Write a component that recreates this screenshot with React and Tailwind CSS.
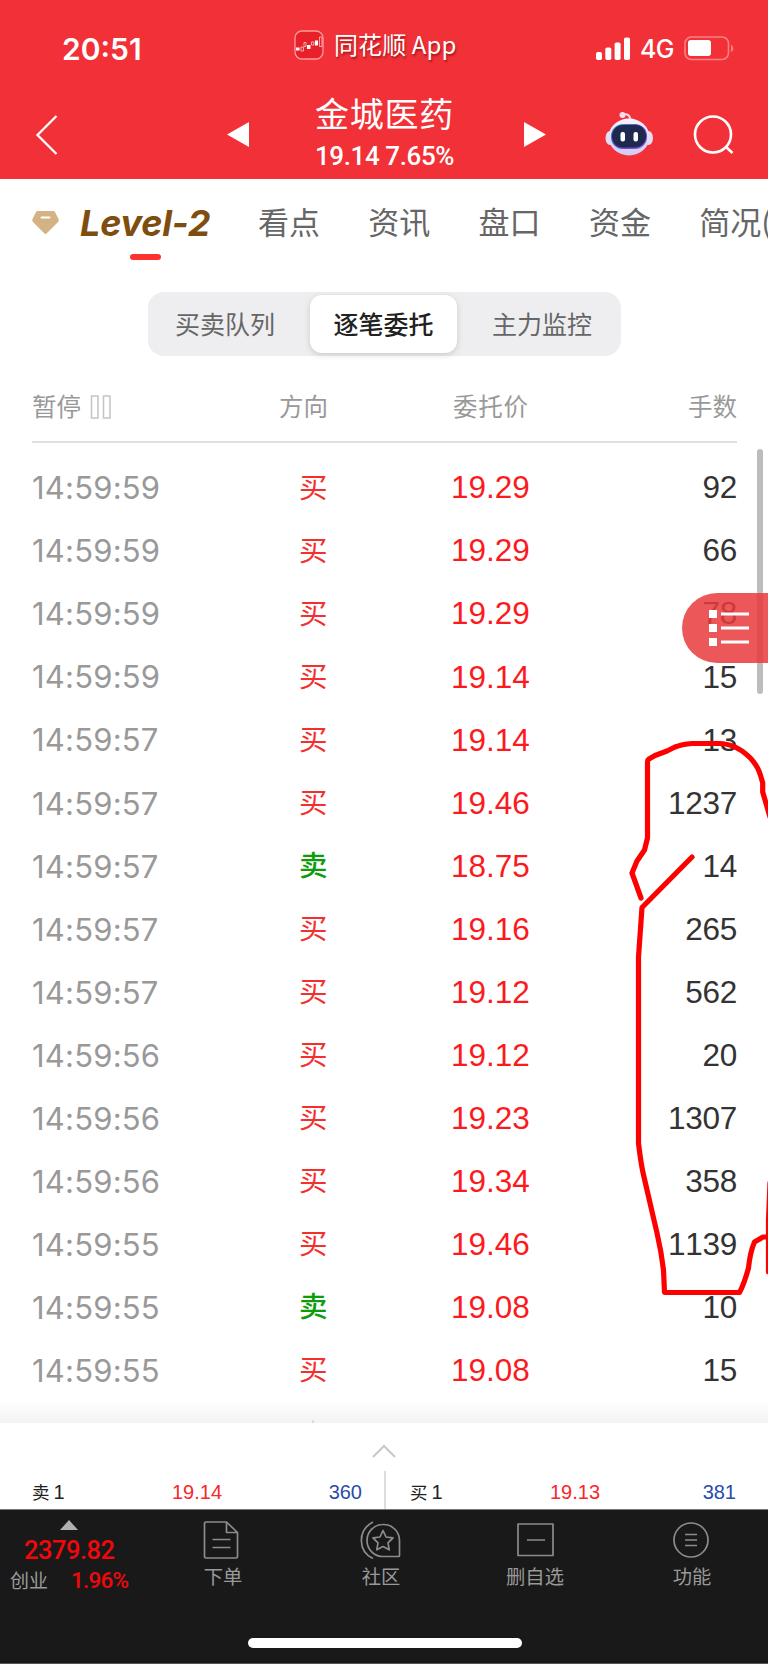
const TABS = ['看点', '资讯', '盘口', '资金', '简况('];

const ORDERS = [
  { time: '14:59:59', side: '买', price: '19.29', lots: 92 },
  { time: '14:59:59', side: '买', price: '19.29', lots: 66 },
  { time: '14:59:59', side: '买', price: '19.29', lots: 78 },
  { time: '14:59:59', side: '买', price: '19.14', lots: 15 },
  { time: '14:59:57', side: '买', price: '19.14', lots: 13 },
  { time: '14:59:57', side: '买', price: '19.46', lots: 1237 },
  { time: '14:59:57', side: '卖', price: '18.75', lots: 14 },
  { time: '14:59:57', side: '买', price: '19.16', lots: 265 },
  { time: '14:59:57', side: '买', price: '19.12', lots: 562 },
  { time: '14:59:56', side: '买', price: '19.12', lots: 20 },
  { time: '14:59:56', side: '买', price: '19.23', lots: 1307 },
  { time: '14:59:56', side: '买', price: '19.34', lots: 358 },
  { time: '14:59:55', side: '买', price: '19.46', lots: 1139 },
  { time: '14:59:55', side: '卖', price: '19.08', lots: 10 },
  { time: '14:59:55', side: '买', price: '19.08', lots: 15 },
];

function AppLogo() {
  return (
    <svg width="30" height="30" viewBox="0 0 30 30" fill="none">
      <rect x="1" y="1" width="28" height="28" rx="7" fill="#e8202a" stroke="#ff9a9c" strokeWidth="1.3" />
      <path d="M2 17.5h3.5v3H2z M13 15h3.5v4H13z M21 10.500h3v5h-3z" fill="#fff" />
      <path d="M7 17h2.500v4H7z M10 12.500h2v4h-2z M17.500 12h2.500v3h-2.500z M25.500 7h2.500v9.500h-2.500z" stroke="#ffc9c9" strokeWidth=".8" />
    </svg>
  );
}

function Signal() {
  return (
    <svg width="35" height="24" viewBox="0 0 35 24" fill="#fff">
      <rect x="0" y="15" width="6" height="8" rx="1.800" />
      <rect x="9.300" y="10.500" width="6" height="12.500" rx="1.800" />
      <rect x="18.600" y="5.500" width="6" height="17.500" rx="1.800" />
      <rect x="28" y="0.500" width="6" height="22.500" rx="1.800" />
    </svg>
  );
}

function Battery() {
  return (
    <svg className="-mt-px" width="51" height="25" viewBox="0 0 51 25" fill="none">
      <rect x="1" y="1" width="43.500" height="22.500" rx="6.500" stroke="#fa8085" strokeWidth="1.600" />
      <rect x="4" y="4" width="23" height="16" rx="3" fill="#fff" />
      <path d="M47 9c3 1 3 6 0 7z" fill="#fa8085" />
    </svg>
  );
}

function Robot() {
  return (
    <svg width="48" height="46" viewBox="0 0 48 46" fill="none">
      <defs>
        <linearGradient id="shell" x1="0" y1="0" x2="0" y2="1">
          <stop offset="0" stopColor="#fbf3fb" />
          <stop offset="1" stopColor="#cfcaf2" />
        </linearGradient>
        <linearGradient id="visor" x1="0" y1="0" x2="1" y2="1">
          <stop offset="0" stopColor="#3aa6c9" />
          <stop offset=".5" stopColor="#5a3fc4" />
          <stop offset="1" stopColor="#8d5ae8" />
        </linearGradient>
      </defs>
      <path d="M17 4c5-2 8 0 8.500 5" stroke="#f5dfee" strokeWidth="2" />
      <circle cx="17.500" cy="4" r="3" fill="#f5dfee" />
      <ellipse cx="5" cy="27" rx="4.500" ry="7" fill="#e4dcf6" />
      <ellipse cx="43.500" cy="27" rx="4.500" ry="7" fill="#e4dcf6" />
      <ellipse cx="24" cy="26" rx="20.500" ry="18.500" fill="url(#shell)" />
      <rect x="6" y="13" width="36" height="25" rx="12" fill="url(#visor)" />
      <rect x="7" y="14" width="34" height="22.500" rx="11" fill="#1f294e" />
      <rect x="15.500" y="21" width="4.500" height="9.500" rx="2" fill="#fff" />
      <rect x="28.500" y="21" width="4.500" height="9.500" rx="2" fill="#fff" />
    </svg>
  );
}

function StatusBar() {
  return (
    <div className="flex h-[98px] items-center text-white">
      <span className="ml-[62px] w-[232px] font-['Inter'] text-[30px] font-semibold leading-none">20:51</span>
      <div className="-mt-2 flex w-[302px] items-center">
        <AppLogo />
        <span className="-mt-[3px] ml-[10px] text-[24px] leading-none tracking-[0.1px] [text-shadow:1px_2px_2px_rgba(90,0,0,0.5)]">
          同花顺 App
        </span>
      </div>
      <Signal />
      <span className="ml-[9px] mt-px w-[44px] font-['Inter'] text-[25px] font-medium leading-none tracking-tight">4G</span>
      <Battery />
    </div>
  );
}

function TitleBar() {
  return (
    <div className="flex h-[81px] text-white">
      <svg className="ml-[35px] mt-4" width="24" height="42" viewBox="0 0 24 42" fill="none" stroke="#fff" strokeWidth="2.300">
        <path d="M21.500 2 2.500 21l19 19" />
      </svg>
      <svg className="ml-[168px] mt-6" width="22" height="25" viewBox="0 0 22 25" fill="#fff">
        <path d="M22 0v25L0 12.500z" />
      </svg>
      <div className="ml-[42px] flex w-[187px] flex-col items-center">
        <h1 className="-mt-[5px] text-[34px] leading-[40px] tracking-[0.8px]">金城医药</h1>
        <p className="mt-[8px] whitespace-nowrap font-['Roboto'] text-[26px] font-medium leading-[30px] tracking-[-0.4px]">19.14 7.65%</p>
      </div>
      <svg className="ml-[46px] mt-6" width="22" height="25" viewBox="0 0 22 25" fill="#fff">
        <path d="M0 0v25l22-12.500z" />
      </svg>
      <div className="ml-[59px] mt-[13px]">
        <Robot />
      </div>
      <svg className="ml-[40px] mt-4" width="42" height="42" viewBox="0 0 42 42" fill="none" stroke="#fff" strokeWidth="2.600">
        <circle cx="20" cy="20.500" r="18" />
        <path d="M32.500 32.500l7 6.500" />
      </svg>
    </div>
  );
}

function Tabs() {
  return (
    <nav className="flex h-[113px] overflow-hidden whitespace-nowrap text-[#666]">
      <svg className="ml-8 mt-[32px] shrink-0" width="27" height="24" viewBox="0 0 27 24" fill="none">
        <path d="M6 0h15c1 0 1.500.5 2 1l3.500 7c.5 1 .3 2-.5 3L14.500 22.500c-.6.600-1.400.600-2 0L1 11C.2 10 0 9 .5 8L4 1c.5-.5 1-1 2-1z" fill="#d3b283" />
        <path d="M9.500 6.500h8" stroke="#fff" strokeWidth="2" strokeLinecap="round" />
      </svg>
      <div className="ml-[21px] mt-[24px] flex w-[178px] shrink-0 flex-col">
        <span className="font-['Inter'] text-[36px] font-bold italic leading-[40px] tracking-[-0.2px] text-[#7d4e10]">Level-2</span>
        <span className="ml-[50px] mt-[11px] h-[6px] w-[31px] rounded-full bg-[#fd322f]" />
      </div>
      {TABS.map((tab) => (
        <span key={tab} className="mt-[20px] w-[110.300px] shrink-0 text-[31px] leading-[44px]">
          {tab}
        </span>
      ))}
    </nav>
  );
}

function Segments() {
  return (
    <div className="mx-[148px] flex h-16 w-[473px] items-center rounded-2xl bg-[#eeeef0] text-[25px] text-[#666]">
      <span className="w-[162px] pl-[27px]">买卖队列</span>
      <span className="flex h-[58px] w-[147px] items-center justify-center rounded-xl bg-white font-medium text-[#222] shadow-[0_2px_6px_rgba(0,0,0,0.15)]">
        逐笔委托
      </span>
      <span className="pl-[35px]">主力监控</span>
    </div>
  );
}

function OrderRow({ time, side, price, lots }) {
  return (
    <li className="flex h-[63.050px] items-center font-['Liberation_Sans'] text-[31.500px] [font-kerning:none]">
      <span className="w-[267px] font-['Inter'] text-[31px] tracking-[0.2px] text-[#999] [font-kerning:auto]">{time}</span>
      <span
        className={`-mt-[5px] w-[152px] font-['Noto_Sans_CJK_SC'] text-[28.500px] ${
          side === '买' ? 'text-[#f4302f]' : 'font-medium text-[#0c9c0c]'
        }`}
      >
        {side}
      </span>
      <span className="-mt-px text-[#fb1a1d]">{price}</span>
      <span className="-mt-px ml-auto tracking-[-0.3px] text-[#333]">{lots}</span>
    </li>
  );
}

function OrderList() {
  return (
    <section className="relative h-[1067px] overflow-hidden pl-8 pr-[31px] text-[#999]">
      <div className="flex h-[87px] items-center border-b-2 border-[#e0e0e0] pt-[16px] text-[24.500px]">
        <span>暂停</span>
        <svg className="ml-[9px]" width="22" height="24" viewBox="0 0 22 24" fill="none" stroke="#c4c4c4" strokeWidth="1.500">
          <path d="M1.500 1h6.500v22H1.500z M13.500 1H20v22h-6.500z" />
        </svg>
        <span className="ml-[167px]">方向</span>
        <span className="ml-[125px] tracking-[0.700px]">委托价</span>
        <span className="ml-auto">手数</span>
      </div>
      <ul className="mt-[14px]">
        {ORDERS.map((order, i) => (
          <OrderRow key={i} {...order} />
        ))}
      </ul>
      <div className="absolute inset-x-0 bottom-0 h-6 bg-gradient-to-b from-transparent to-[#f3f3f3]" />
      {/* Tip of the next row's 卖 under the panel */}
      <div className="absolute bottom-0 left-[312px] h-[3px] w-[2px] bg-[#cfe8cf]" />
      <div className="absolute right-[5px] top-[93px] h-[245px] w-[6px] rounded-full bg-[#bdbdbd]" />
      <button className="absolute right-0 top-[237px] h-[70px] w-[86px] rounded-l-full bg-[#e93a3c]/85">
        <svg className="ml-[27px]" width="42" height="38" viewBox="0 0 42 38" fill="#fff">
          <path d="M0 1h8v8H0z M0 15h8v8H0z M0 29h8v8H0z M12 3.500h28v3H12z M12 17.500h28v3H12z M12 31.500h28v3H12z" />
        </svg>
      </button>
    </section>
  );
}

function Quote({ label, price, lots }) {
  return (
    <div className="flex flex-1 items-center font-['Liberation_Sans','Noto_Sans_CJK_SC'] text-[20px]">
      <span className="w-[140px] text-[17.500px] text-[#222]">
        {label} <span className="-ml-[1px] text-[20px]">1</span>
      </span>
      <span className="text-[#f9262b]">{price}</span>
      <span className="ml-auto text-[#2a4ca8]">{lots}</span>
    </div>
  );
}

function QuotePanel() {
  return (
    <section className="h-[87px] border-b border-[#777] bg-white">
      <svg className="mx-auto pt-5" width="24" height="36" viewBox="0 0 24 16" fill="none" stroke="#c8c8c8" strokeWidth="2">
        <path d="M1 14 12 3l11 11" />
      </svg>
      <div className="mt-[12px] flex h-[38px] items-center">
        <div className="flex w-[384px] pl-8 pr-[22px] pt-1">
          <Quote label="卖" price="19.14" lots="360" />
        </div>
        <div className="h-full w-[2px] bg-[#ddd]" />
        <div className="flex flex-1 pl-6 pr-8 pt-1">
          <Quote label="买" price="19.13" lots="381" />
        </div>
      </div>
    </section>
  );
}

function BarItem({ label, className, children }) {
  return (
    <div className={`flex flex-col items-center ${className}`}>
      <svg width="42" height="40" viewBox="0 0 42 40" fill="none" stroke="#8c8c8c" strokeWidth="1.700" strokeLinejoin="round">
        {children}
      </svg>
      <span className="mt-[3px] text-[19.300px] leading-[26px] text-[#999]">{label}</span>
    </div>
  );
}

function BottomBar() {
  return (
    <footer className="flex h-[154px] flex-col border-b border-[#555] bg-[#191919]">
      <div className="flex h-[128px] pt-[10px]">
        <div className="flex w-[140px] flex-col font-['Roboto'] font-medium text-[#f0080a]">
          <svg className="ml-[60px]" width="18" height="10" viewBox="0 0 18 10" fill="#b0b0b0">
            <path d="M9 0l9 10H0z" />
          </svg>
          <span className="ml-6 mt-[4px] text-[25.500px] leading-[32px] tracking-[-0.5px]">2379.82</span>
          <div className="ml-[10px] flex items-center leading-[28px]">
            <span className="w-[61px] font-['Noto_Sans_CJK_SC'] text-[19px] font-normal text-[#999]">创业</span>
            <span className="text-[22.500px] tracking-[-0.8px]">1.96%</span>
          </div>
        </div>
        <BarItem label="下单" className="ml-[53px] w-[60px]">
          <path d="M24.500 2H4c-1 0-1.500.5-1.500 1.500v33c0 1 .5 1.500 1.500 1.500h30c1 0 1.500-.5 1.500-1.500V12.500z M24.500 2v10.500h11 M10.500 19.500h18 M10.500 27.500h18" />
        </BarItem>
        <BarItem label="社区" className="ml-[98px] w-[60px]">
          <path d="M23 4.500a16 16 0 0 0 0 32h15.500c.5 0 1-.5 1-1V20.500a16 16 0 0 0-16.500-16z" />
          <path d="M13 2C-2.500 10-2.500 31 13 38.500" />
          <path d="M23 10.500l3 6.500 7 .8-5 5 1.200 7-6.200-3.300-6.200 3.300 1.200-7-5-5 7-.8z" />
        </BarItem>
        <BarItem label="删自选" className="ml-[94px] w-[60px]">
          <path d="M4 4h35v31.500H4z M13 20h18" />
        </BarItem>
        <BarItem label="功能" className="ml-[97px] w-[60px]">
          <circle cx="20" cy="20" r="17" />
          <path d="M14 14.500h12 M14 20h12 M14 25.500h12" />
        </BarItem>
      </div>
      <div className="ml-[248px] h-[10px] w-[274px] rounded-full bg-white" />
    </footer>
  );
}

// Freehand pen marks around the large orders
function PenMarks() {
  return (
    <svg
      className="pointer-events-none absolute left-0 top-0"
      width="768"
      height="1664"
      viewBox="0 0 768 1664"
      fill="none"
      stroke="#fe0000"
      strokeWidth="5.200"
      strokeLinecap="round"
      strokeLinejoin="round"
    >
      <path d="M770 817 762.700 792v-9C761 777 760 772 757 767 754 762 751 758 747 755 743 751 739 749 735 747 730 745 725 743.500 720 743.500H692C686 744 680 745 675 747L667 751 655 755.500 649 759Q647.500 760 647.500 762V838L644.500 850 637 861 632 873 641 898" />
      <path d="M692 857 642 907.500 638.500 957V1143C640 1156 641 1165 644 1177L657 1233C660 1246 662 1257 663.500 1270L664.500 1292.500H739.500C742 1288 746 1277 748.500 1268 749.500 1258 751 1250 754.500 1242L763 1237H770" />
      <path d="M770 1183 768.500 1220V1272" />
    </svg>
  );
}

export default function App() {
  return (
    <main className="relative flex h-[1664px] w-[768px] flex-col overflow-hidden bg-white font-['Noto_Sans_CJK_SC',sans-serif]">
      <header className="bg-[#f23037]">
        <StatusBar />
        <TitleBar />
      </header>
      <Tabs />
      <Segments />
      <OrderList />
      <QuotePanel />
      <BottomBar />
      <PenMarks />
    </main>
  );
}
